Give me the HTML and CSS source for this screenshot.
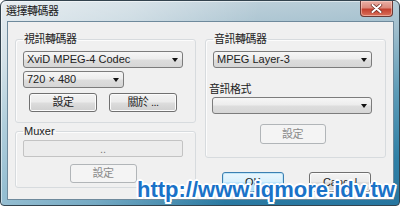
FILE: index.html
```html
<!DOCTYPE html>
<html>
<head>
<meta charset="utf-8">
<link rel="stylesheet" href="styles.css">
</head>
<body>
<div class="window">
  <div class="titlebar">
    <span class="title cjk">選擇轉碼器</span>
    <div class="close">
      <svg width="13" height="9" viewBox="0 0 13 9"><path d="M2.5 1 L10.5 8 M10.5 1 L2.5 8" stroke="#6b2a22" stroke-width="3.4" stroke-linecap="round"/><path d="M2.5 1 L10.5 8 M10.5 1 L2.5 8" stroke="#fff" stroke-width="2" stroke-linecap="round"/></svg>
    </div>
  </div>
  <div class="client">
    <div class="col">
      <fieldset class="group g-video">
        <legend class="cjk">視訊轉碼器</legend>
        <div class="combo w160"><span>XviD MPEG-4 Codec</span><i class="arrow"></i></div>
        <div class="combo w101 gap3"><span>720 × 480</span><i class="arrow"></i></div>
        <div class="btnrow">
          <div class="btn cjk">設定</div>
          <div class="btn cjk">關於 ...</div>
        </div>
      </fieldset>
      <fieldset class="group g-muxer">
        <legend>Muxer</legend>
        <div class="field">..</div>
        <div class="btn disabled cjk center">設定</div>
      </fieldset>
    </div>
    <div class="col">
      <fieldset class="group g-audio">
        <legend class="cjk">音訊轉碼器</legend>
        <div class="combo w159"><span>MPEG Layer-3</span><i class="arrow"></i></div>
        <div class="label cjk">音訊格式</div>
        <div class="combo w160 shift"><span></span><i class="arrow"></i></div>
        <div class="btn disabled cjk center b66">設定</div>
      </fieldset>
      <div class="actions">
        <div class="btn default">OK</div>
        <div class="btn">Cancel</div>
      </div>
    </div>
  </div>
  <div class="watermark">http://www.iqmore.idv.tw</div>
</div>
</body>
</html>
```
FILE: styles.css
```css
html, body {
  margin: 0;
  padding: 0;
}
body {
  width: 400px;
  height: 206px;
  overflow: hidden;
  background: #ffffff;
  font-family: "Liberation Sans", "Noto Sans CJK TC", sans-serif;
  font-size: 11px;
  color: #222;
}
.cjk {
  letter-spacing: -0.5px;
}
.window {
  position: relative;
  width: 400px;
  height: 206px;
  box-sizing: border-box;
  border: 1px solid #33434e;
  border-radius: 6px 6px 4px 4px;
  padding: 0 5px 5px 6px;
  display: flex;
  flex-direction: column;
  background:
    linear-gradient(100deg, rgba(255,255,255,0.55) 0%, rgba(255,255,255,0.35) 30%, rgba(255,255,255,0) 60%),
    linear-gradient(175deg, #cbd8e0 0%, #a3c0ce 25%, #5e9cb7 52%, #2f80a6 80%, #2776a0 100%);
  box-shadow: inset 1px 1px 0 rgba(255,255,255,0.5);
  overflow: hidden;
}
.titlebar {
  height: 20px;
  display: flex;
  align-items: flex-start;
  flex: none;
}
.title {
  margin-top: 4px;
  margin-left: -1px;
  line-height: 12px;
  color: #1a1a1a;
}
.close {
  margin-left: auto;
  margin-right: 1px;
  width: 33px;
  height: 16px;
  box-sizing: border-box;
  border: 1px solid #6a3a36;
  border-top: none;
  border-radius: 0 0 4px 4px;
  background: linear-gradient(#eab0a6 0%, #dc8a7c 45%, #c4402e 55%, #d9705a 100%);
  box-shadow: inset 0 0 0 1px rgba(255,220,210,0.5);
  display: flex;
  align-items: center;
  justify-content: center;
}
.client {
  flex: 1;
  background: #f0f0f0;
  border: 1px solid #6f8a9c;
  padding: 11px 7px 0 7px;
  display: grid;
  grid-template-columns: 181px 181px;
  column-gap: 9px;
  align-content: start;
}
.col {
  display: flex;
  flex-direction: column;
}
.group {
  margin: 0;
  min-inline-size: 0;
  border: 1px solid #d7dbde;
  border-radius: 3px;
  box-shadow: inset 1px 1px 0 #fcfcfc;
  padding: 6px 12px 10px 7px;
  display: flex;
  flex-direction: column;
  align-items: flex-start;
}
.group legend {
  padding: 0 1px;
  margin-left: 0;
  line-height: 12px;
  height: 12px;
  color: #222;
}
.g-muxer {
  margin-top: 2px;
  padding: 3px 12px 4px 7px;
  align-items: stretch;
}
.g-audio {
  padding: 6px 13px 13px 7px;
  align-items: stretch;
}
.combo {
  height: 17px;
  box-sizing: border-box;
  border: 1px solid #7c7c7c;
  border-radius: 3px;
  background: linear-gradient(#f6f6f6 0%, #ececec 48%, #dddddd 52%, #d6d6d6 100%);
  display: flex;
  align-items: center;
  padding-left: 3px;
  line-height: 13px;
}
.combo span {
  flex: 1;
  white-space: nowrap;
}
.arrow {
  width: 0;
  height: 0;
  border-left: 3.5px solid transparent;
  border-right: 3.5px solid transparent;
  border-top: 4px solid #111;
  margin-right: 4px;
  margin-top: 1px;
}
.w160 { width: 160px; }
.w101 { width: 101px; }
.w159 { width: 159px; }
.gap3 { margin-top: 3px; }
.shift { margin-left: -1px; margin-top: 2px; }
.label {
  margin-top: 15px;
  margin-left: -4px;
  line-height: 12px;
  color: #222;
}
.btnrow {
  display: flex;
  gap: 12px;
  margin-top: 5px;
  margin-left: 6px;
}
.btn {
  width: 68px;
  height: 19px;
  box-sizing: border-box;
  border: 1px solid #707070;
  border-radius: 3px;
  background: linear-gradient(#f3f3f3 0%, #ebebeb 48%, #dddddd 52%, #cfcfcf 100%);
  box-shadow: inset 0 0 0 1px #fbfbfb;
  display: flex;
  align-items: center;
  justify-content: center;
  line-height: 13px;
  color: #222;
}
.btn.disabled {
  border-color: #b1b5b8;
  background: #f4f4f4;
  box-shadow: none;
  color: #8a8a8a;
}
.center {
  align-self: center;
  width: 67px;
}
.g-muxer .btn {
  margin-top: 7px;
}
.b66 {
  width: 66px;
  margin-top: 10px;
  height: 20px;
}
.field {
  height: 17px;
  box-sizing: border-box;
  border: 1px solid #c3c3c3;
  border-radius: 2px;
  background: #ececec;
  color: #7a7a7a;
  display: flex;
  align-items: center;
  justify-content: center;
  line-height: 12px;
}
.actions {
  display: flex;
  justify-content: flex-end;
  gap: 25px;
  margin-top: 14px;
  padding-right: 15px;
}
.actions .btn {
  width: 62px;
  height: 20px;
  align-items: flex-start;
  padding-top: 3px;
}
.btn.default {
  border-color: #3c7fb1;
  background: linear-gradient(#eaf6fd 0%, #d9f0fc 48%, #bee6fd 52%, #a7d9f5 100%);
  box-shadow: inset 0 0 0 1px #bfe6f8;
}
.watermark {
  position: absolute;
  left: 136px;
  top: 177px;
  font-family: "Liberation Sans", sans-serif;
  font-weight: bold;
  font-size: 22px;
  line-height: 24px;
  color: #1a72c8;
  white-space: nowrap;
  text-shadow:
    2px 0 0 #fff, -2px 0 0 #fff, 0 2px 0 #fff, 0 -2px 0 #fff,
    1.5px 1.5px 0 #fff, -1.5px 1.5px 0 #fff, 1.5px -1.5px 0 #fff, -1.5px -1.5px 0 #fff;
}
```
